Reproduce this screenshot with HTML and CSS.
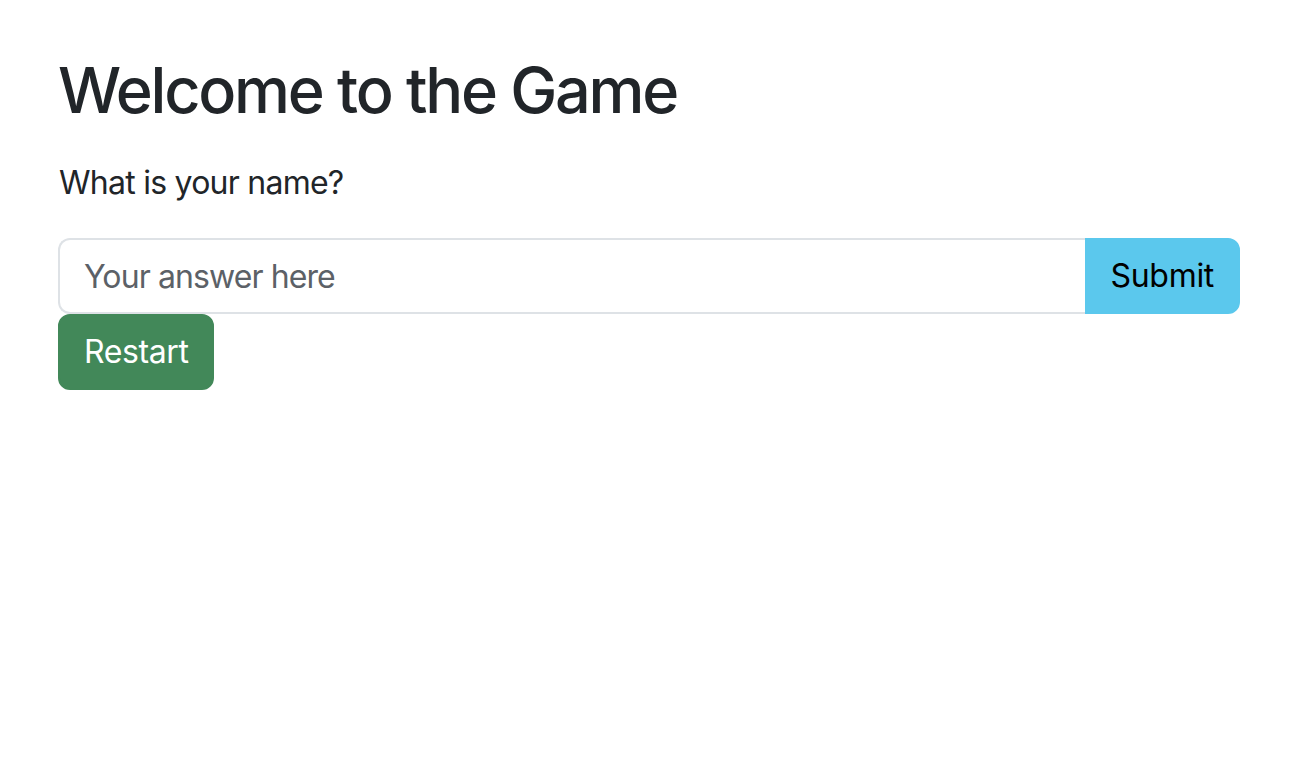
FILE: index.html
```html
<!DOCTYPE html>
<html lang="en">
<head>
<meta charset="utf-8">
<title>Game</title>
<link rel="stylesheet" href="styles.css">
</head>
<body>
<main class="container">
  <h1 class="title">Welcome to the Game</h1>
  <p class="question">What is your name?</p>
  <div class="input-group">
    <input class="answer" type="text" placeholder="Your answer here">
    <button class="btn btn-submit" type="button">Submit</button>
  </div>
  <button class="btn btn-restart" type="button">Restart</button>
</main>
</body>
</html>
```

FILE: styles.css
```css
* { box-sizing: border-box; }
html, body { margin: 0; padding: 0; background: #fff; }
body {
  font-family: Inter, "Noto Sans", "Liberation Sans", sans-serif;
  color: #212529;
  font-size: 32px;
  line-height: 1.5;
}
.container {
  padding: 52px 60px 0 58px;
}
.title {
  margin: 0 0 31px 0;
  font-size: 63px;
  font-weight: 500;
  line-height: 76px;
  letter-spacing: -2.25px;
}
.question {
  margin: 0 0 31px 1px;
  font-size: 32px;
  line-height: 48px;
  letter-spacing: -0.75px;
}
.input-group {
  display: flex;
  align-items: stretch;
  width: 100%;
}
.answer {
  flex: 1 1 auto;
  min-width: 0;
  height: 76px;
  padding: 12px 24px;
  font-family: inherit;
  font-size: 32px;
  line-height: 48px;
  letter-spacing: -0.9px;
  color: #212529;
  background: #fff;
  border: 2px solid #dee2e6;
  border-right: 0;
  border-radius: 12px 0 0 12px;
  outline: none;
}
.answer::placeholder { color: #5c6167; opacity: 1; }
.btn {
  font-family: inherit;
  font-size: 32px;
  line-height: 48px;
  padding: 12px 24px;
  border: 2px solid transparent;
  cursor: pointer;
}
.btn-submit {
  background: #5bc8ed;
  border-color: #5bc8ed;
  color: #000;
  border-radius: 0 12px 12px 0;
  height: 76px;
  letter-spacing: -0.3px;
}
.btn-restart {
  display: block;
  background: #428859;
  border-color: #428859;
  color: #fff;
  border-radius: 12px;
  height: 76px;
  letter-spacing: -0.4px;
}
```
